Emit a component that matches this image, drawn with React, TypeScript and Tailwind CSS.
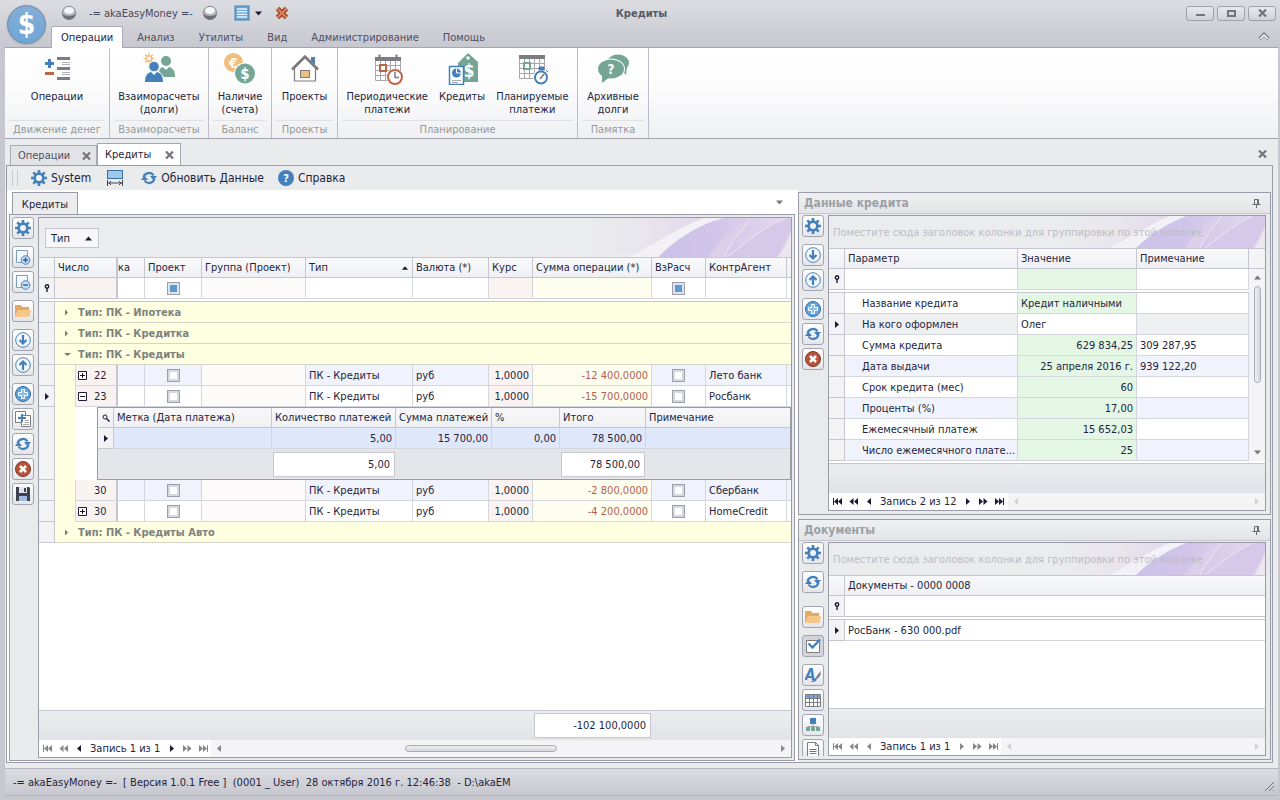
import { ReactNode } from 'react';

interface IconProps {
  className?: string;
}

interface ToolItem {
  label: string;
  icon: ReactNode;
  gap?: string;
  pressed?: boolean;
}

interface Operation {
  id: string;
  day: string;
  expand: string;
  sum: string;
  agent: string;
}

const BLUE = '#4680bb';
const GREEN = '#74a595';
const GRAY = '#7b7b80';
const ORANGE = '#efbd7c';
const RUST = '#bd6646';

const OperationsIcon = () => (
  <svg viewBox="0 0 32 32" className="size-8">
    <path d="M7 6h3v3h3v3h-3v3H7v-3H4V9h3z" fill={BLUE} />
    <rect x="4" y="19" width="9" height="3" fill={RUST} />
    <path d="M16 4h13v3H16zM16 14h13v3H16zM16 24h13v3H16z" fill={GRAY} />
    <path d="M21 9.500h8M21 11.500h8M21 19.500h8M21 21.500h8" stroke="#b4b4b8" />
  </svg>
);

const PeopleIcon = () => (
  <svg viewBox="0 0 32 32" className="size-8">
    <path d="M6 0v11M.5 5.500h11M2 1.500l8 8M10 1.500l-8 8" stroke={ORANGE} strokeWidth="1.200" />
    <circle cx="6" cy="5.500" r="2.800" fill="#fff" stroke={ORANGE} strokeWidth="1.500" />
    <circle cx="23" cy="8" r="5" fill={GREEN} />
    <path d="M16 18c1-3 3-4 4-4l3 3 3-3c4 1 6 4 6 10H21z" fill={GREEN} />
    <circle cx="11" cy="13.500" r="5.200" fill={BLUE} stroke="#fff" strokeWidth=".8" />
    <path d="M2 29c0-6 2-9 6-10l3 3 3-3c4 1 6 4 6 10z" fill={BLUE} />
  </svg>
);

const CoinsIcon = () => (
  <svg viewBox="0 0 32 32" className="size-8">
    <circle cx="9.500" cy="9.500" r="9.500" fill={ORANGE} />
    <text x="9.500" y="14.500" textAnchor="middle" fontSize="14" fontWeight="bold" fill="#fff">€</text>
    <circle cx="21" cy="20.500" r="11" fill="#fff" />
    <circle cx="21" cy="20.500" r="10" fill={GREEN} />
    <text x="21" y="26" textAnchor="middle" fontSize="15" fontWeight="bold" fill="#fff">$</text>
  </svg>
);

const HouseIcon = () => (
  <svg viewBox="0 0 32 32" className="size-8">
    <path d="M22 4h4v8l-4-4z" fill={BLUE} />
    <path d="M5.500 15v13h21V15L16 4.500z" fill="#fff" stroke={GRAY} strokeWidth="1.200" />
    <path d="M3 16.500L16 3.500l13 13" fill="none" stroke={GRAY} strokeWidth="2.600" />
    <rect x="11.500" y="17.500" width="9" height="7" fill={ORANGE} stroke={GRAY} />
  </svg>
);

const CalendarGrid = () => (
  <g>
    <path d="M4.500 6v21.500h25V6zM4.500 12.500h25M4.500 17.500h25M4.500 22.500h25M9.500 8v19.500M14.500 8v19.500M19.500 8v19.500M24.500 8v19.500" fill="#fff" stroke="#a7a7ab" />
    <rect x="4" y="4" width="26" height="4" fill={GRAY} />
  </g>
);

const PeriodicIcon = () => (
  <svg viewBox="0 0 32 32" className="size-8">
    <CalendarGrid />
    <path d="M8.500 1.500v4M25.500 1.500v4" stroke={GRAY} strokeWidth="2" />
    <rect x="9" y="12" width="6" height="6" fill="#fff" stroke={RUST} strokeWidth="2" />
    <circle cx="24" cy="24" r="8.500" fill="#fff" />
    <circle cx="24" cy="24" r="7" fill="#fff" stroke={RUST} strokeWidth="2" />
    <path d="M24 19v5.500h4" fill="none" stroke={GRAY} strokeWidth="1.500" />
  </svg>
);

const CreditsIcon = () => (
  <svg viewBox="0 0 32 32" className="size-8">
    <path d="M12 10L22 0l10 9v20H12z" fill={GREEN} />
    <circle cx="22" cy="5" r="1.800" fill="#fff" />
    <text x="23" y="24" textAnchor="middle" fontSize="17" fontWeight="bold" fill="#fff">$</text>
    <rect x="3.500" y="13.500" width="14" height="18" fill="#fff" stroke={BLUE} strokeWidth="1.500" />
    <circle cx="10.500" cy="20" r="4.500" fill={BLUE} />
    <path d="M10.500 15.500V20H15" fill="none" stroke="#fff" />
    <path d="M6 27.500h9M6 29.500h6" stroke="#a7a7ab" />
  </svg>
);

const PlannedIcon = () => (
  <svg viewBox="0 0 32 32" className="size-8">
    <g transform="translate(-1 -2)">
      <CalendarGrid />
    </g>
    <rect x="8" y="10" width="6" height="6" fill="#fff" stroke={GREEN} strokeWidth="2" />
    <circle cx="25" cy="24.500" r="8" fill="#fff" />
    <path d="M23 14h5v3h-5zM30 17l2 2" fill={BLUE} stroke={BLUE} />
    <circle cx="25" cy="24.500" r="6" fill="#fff" stroke={BLUE} strokeWidth="2" />
    <path d="M24 26l4-5" stroke={GRAY} strokeWidth="1.500" />
  </svg>
);

const ArchiveIcon = () => (
  <svg viewBox="0 0 32 32" className="size-8">
    <ellipse cx="21" cy="10" rx="11" ry="8.500" fill={GREEN} />
    <path d="M24 16l5 6 1-8z" fill={GREEN} />
    <ellipse cx="14" cy="16" rx="14" ry="10.500" fill="#fff" />
    <ellipse cx="14" cy="16" rx="13" ry="9.500" fill={GREEN} />
    <path d="M5 21v9l8-6z" fill={GREEN} />
    <text x="14" y="21" textAnchor="middle" fontSize="14" fontWeight="bold" fill="#fff">?</text>
  </svg>
);

const GearIcon = () => (
  <svg viewBox="0 0 16 16" className="size-4">
    <path
      d="M8 0v16M0 8h16M2.300 2.300l11.400 11.400M13.700 2.300L2.300 13.700"
      stroke={BLUE}
      strokeWidth="2.600"
    />
    <circle cx="8" cy="8" r="5.700" fill={BLUE} />
    <circle cx="8" cy="8" r="3" fill="#f2f3f6" />
  </svg>
);

const RefreshIcon = () => (
  <svg viewBox="0 0 16 16" className="size-4">
    <path d="M2.500 7C4 2.500 10 1.500 12.500 5.500M13.500 9C12 13.500 6 14.500 3.500 10.500" fill="none" stroke={BLUE} strokeWidth="2.200" />
    <path d="M9 6h7l-3.500 4.500zM0 10l3.500-4.500L7 10z" fill={BLUE} />
  </svg>
);

const FitWidthIcon = () => (
  <svg viewBox="0 0 16 16" className="size-4">
    <rect x=".5" y=".5" width="15" height="8" fill="#9cc9e8" stroke="#3a6e9c" />
    <path d="M.5 10v6M15.500 10v6M1 13h14M4 11l-2 2 2 2M12 11l2 2-2 2" fill="none" stroke="#44444c" />
  </svg>
);

const HelpIcon = () => (
  <svg viewBox="0 0 16 16" className="size-4">
    <circle cx="8" cy="8" r="8" fill={BLUE} />
    <text x="8" y="12" textAnchor="middle" fontSize="11" fontWeight="bold" fill="#fff">?</text>
  </svg>
);

const PageIcon = ({ minus }: { minus?: boolean }) => (
  <svg viewBox="0 0 16 16" className="size-4">
    <path d="M1.500 1.500h11v12h-11z" fill="#f4f8fc" stroke="#7d9dc0" />
    <circle cx="10.500" cy="11" r="4.300" fill="#c8def2" stroke={BLUE} />
    <path d={minus ? 'M8 11h5' : 'M8 11h5M10.500 8.500v5'} stroke="#2d6299" strokeWidth="1.400" />
  </svg>
);

const FolderIcon = () => (
  <svg viewBox="0 0 16 16" className="size-4">
    <path d="M0 14V2h6l1 2h7v3H4z" fill="#e3aa66" />
    <path d="M0 14L3 7h13l-1.500 7z" fill="#f5c58a" />
  </svg>
);

const CircleArrowIcon = ({ up }: { up?: boolean }) => (
  <svg viewBox="0 0 16 16" className="size-4">
    <circle cx="8" cy="8" r="7.300" fill="#f4f8fc" stroke={BLUE} />
    <path
      d={up ? 'M8 13V4M4.500 8L8 4.500 11.500 8' : 'M8 3v9M4.500 8L8 11.500 11.500 8'}
      fill="none"
      stroke={BLUE}
      strokeWidth="2.200"
    />
  </svg>
);

const AddIcon = () => (
  <svg viewBox="0 0 16 16" className="size-4">
    <circle cx="8" cy="8" r="7.500" fill="#64a4da" stroke="#2f6ca8" />
    <path d="M6.500 3.500h3v3h3v3h-3v3h-3v-3h-3v-3h3z" fill="#8fc0e8" stroke="#fff" />
  </svg>
);

const CopyPlusIcon = () => (
  <svg viewBox="0 0 16 16" className="size-4">
    <path d="M.5.5h10v11H.5z" fill="#fff" stroke={GRAY} />
    <path d="M6.500 4.500h9v11h-9z" fill="#fff" stroke={GRAY} />
    <path d="M10 9.500h4M10 11.500h4M8 13.500h6" stroke="#a7a7ab" />
    <path d="M7 3v8M3 7h8" stroke={BLUE} strokeWidth="2" />
  </svg>
);

const DeleteIcon = () => (
  <svg viewBox="0 0 16 16" className="size-4">
    <circle cx="8" cy="8" r="7.500" fill="#b8533b" stroke="#7d3526" />
    <path d="M5 5l6 6M11 5l-6 6" stroke="#fff" strokeWidth="2.600" />
  </svg>
);

const SaveIcon = () => (
  <svg viewBox="0 0 16 16" className="size-4">
    <path d="M1 1h13l1 1v13H1z" fill="#3d4250" />
    <rect x="4" y="1" width="8" height="6" fill="#dfe6f0" />
    <rect x="9" y="2" width="2" height="4" fill="#3d4250" />
    <rect x="4" y="10" width="8" height="5" fill="#9dbce0" />
  </svg>
);

const CheckIcon = () => (
  <svg viewBox="0 0 16 16" className="size-4">
    <path d="M1.500 2.500h13v12h-13z" fill="#fff" stroke={GRAY} />
    <path d="M3.500 5.500l4 4L15 1.500" fill="none" stroke={BLUE} strokeWidth="2.400" />
  </svg>
);

const FontIcon = () => (
  <svg viewBox="0 0 16 16" className="size-4">
    <text x="0" y="13" fontSize="15" fontWeight="bold" fontStyle="italic" fill={BLUE}>A</text>
    <path d="M15.500 4v4l-3 4-2-1z" fill={GRAY} />
    <path d="M5 15c3 0 3-4 6-4 2 2 0 4-6 4z" fill={BLUE} />
  </svg>
);

const TableIcon = () => (
  <svg viewBox="0 0 16 16" className="size-4">
    <rect x=".5" y="2.500" width="15" height="12" fill="#fff" />
    <rect x="1" y="3" width="14" height="4" fill="#7ba5d2" />
    <path d="M.5 2.500h15v12H.5zM.5 6.500h15M.5 10.500h15M4.500 2v12M8.500 2v12M12.500 2v12" fill="none" stroke={GRAY} />
  </svg>
);

const TreeIcon = () => (
  <svg viewBox="0 0 16 16" className="size-4">
    <rect x="5" y="1" width="6" height="6" fill={BLUE} />
    <path d="M8 7v3M3 12V9.500h10V12" fill="none" stroke="#a7a7ab" />
    <path d="M1 10h4v4H1zM6 10h4v4H6zM11 10h4v4h-4z" fill={GREEN} />
  </svg>
);

const DocumentIcon = () => (
  <svg viewBox="0 0 16 16" className="size-4">
    <path d="M2.500.5h8l3 3v12h-11z" fill="#fff" stroke={GRAY} />
    <path d="M10.500.5v3h3" fill="none" stroke={GRAY} />
    <path d="M4.500 7.500h7M4.500 9.500h7M4.500 11.500h7" stroke={BLUE} />
  </svg>
);

const BallIcon = () => (
  <svg viewBox="0 0 16 16" className="size-4">
    <circle cx="8" cy="8" r="6.700" fill="#b4b4bd" stroke="#8d8d98" />
    <ellipse cx="8" cy="5.500" rx="5" ry="3.500" fill="#f4f4f7" />
    <path d="M1.500 9.500a6.500 5 0 0 0 13 0 12 8 0 0 1-13 0z" fill="#6f6f7a" />
  </svg>
);

const ListIcon = () => (
  <svg viewBox="0 0 16 16" className="size-4">
    <rect x="1" y="1" width="14" height="14" fill="#6aa9da" stroke="#4a80ac" />
    <path d="M3 4h10M3 6.700h10M3 9.400h10M3 12h10" stroke="#eaf4fc" strokeWidth="1.300" />
  </svg>
);

const CloseCrossIcon = () => (
  <svg viewBox="0 0 16 16" className="size-4">
    <path d="M3.500 3.500l9 9M12.500 3.500l-9 9" stroke="#9c4125" strokeWidth="4.800" />
    <path d="M3.700 3.700l8.600 8.600M12.300 3.700l-8.600 8.600" stroke="#dd8158" strokeWidth="2.200" />
  </svg>
);

const SmallCross = () => (
  <svg viewBox="0 0 9 8" className="h-2 w-[9px]">
    <path d="M1 0.500l7 7M8 .5l-7 7" stroke="#73737b" strokeWidth="2.200" />
  </svg>
);

const Arrow = ({ path, color = '#1d1a36', className = 'size-[9px]' }: IconProps & { path: string; color?: string }) => (
  <svg viewBox="0 0 9 9" className={className}>
    <path d={path} fill={color} />
  </svg>
);

const RIGHT = 'M3 1l4 3.500L3 8z';
const LEFT = 'M6 1L2 4.500 6 8z';
const UP = 'M1 6.500l3.500-4 3.500 4z';
const DOWN = 'M1 2.500h7l-3.500 4z';
const DOUBLE_LEFT = 'M4.500 1L.5 4.500l4 3.500zM9 1L5 4.500 9 8z';
const DOUBLE_RIGHT = 'M0 1l4 3.500L0 8zM4.500 1l4 3.500-4 3.500z';
const FIRST = 'M0 1h1v7H0zM5 1L1 4.500 5 8zM9 1L5 4.500 9 8z';
const LAST = 'M8 1h1v7H8zM0 1l4 3.500L0 8zM4 1l4 3.500L4 8z';

const FilterPin = () => (
  <svg viewBox="0 0 8 8" className="mx-auto h-2 w-2">
    <circle cx="4" cy="2.500" r="1.700" fill="none" stroke="#1d1a36" strokeWidth="1.400" />
    <path d="M4 4v4" stroke="#1d1a36" strokeWidth="1.400" />
  </svg>
);

const ThumbTack = () => (
  <svg viewBox="0 0 9 9" className="size-[9px]">
    <path d="M2.500 0.500h4v5h-4zM.5 5.500h8M4.500 6v3" fill="none" stroke="#6a6a74" />
    <path d="M5 1h2v4H5z" fill="#6a6a74" />
  </svg>
);

const Petals = () => (
  <svg viewBox="0 0 200 40" preserveAspectRatio="xMaxYMid slice" className="absolute inset-y-0 right-0 h-full w-[205px]">
    <defs>
      <linearGradient id="petalSoft" x1="0" x2="1" y1="0" y2="0">
        <stop offset="0" stopColor="#ebecee" />
        <stop offset=".5" stopColor="#e8e5ed" />
        <stop offset="1" stopColor="#e2d6ea" />
      </linearGradient>
      <linearGradient id="petalDeep" x1="0" x2="1" y1="0" y2="0">
        <stop offset="0" stopColor="#cbc0e8" />
        <stop offset=".4" stopColor="#d0c5e9" />
        <stop offset="1" stopColor="#e3d9ec" />
      </linearGradient>
    </defs>
    <path d="M0 0h118C95 8 75 20 50 36L0 40z" fill="url(#petalSoft)" />
    <path d="M40 40C65 28 92 9 118 0h22C112 8 88 20 70 40z" fill="#f2f1f5" />
    <path d="M70 40C86 22 112 6 138 0h62v40z" fill="url(#petalDeep)" />
    <path d="M118 40c10-14 22-28 42-38-14 16-20 26-24 38z" fill="#dccfe9" />
    <path d="M136 40c18-14 36-30 60-39l4 1v12l-14 26z" fill="#d6c8e9" />
    <path d="M160 2c-8 10-18 22-26 38M136 40c18-14 36-30 60-39" fill="none" stroke="#e9e2f1" />
    <path d="M186 40c7-7 11-15 14-26v26z" fill="#eae8ee" />
  </svg>
);

const ribbonTabs = ['Операции', 'Анализ', 'Утилиты', 'Вид', 'Администрирование', 'Помощь'];

const ribbonGroups = [
  {
    caption: 'Движение денег',
    width: 'w-[105px]',
    items: [{ icon: <OperationsIcon />, lines: ['Операции'] }]
  },
  {
    caption: 'Взаиморасчеты',
    width: 'w-[99px]',
    items: [{ icon: <PeopleIcon />, lines: ['Взаиморасчеты', '(долги)'] }]
  },
  {
    caption: 'Баланс',
    width: 'w-[63px]',
    items: [{ icon: <CoinsIcon />, lines: ['Наличие', '(счета)'] }]
  },
  {
    caption: 'Проекты',
    width: 'w-[66px]',
    items: [{ icon: <HouseIcon />, lines: ['Проекты'] }]
  },
  {
    caption: 'Планирование',
    width: 'w-[240px]',
    items: [
      { icon: <PeriodicIcon />, lines: ['Периодические', 'платежи'] },
      { icon: <CreditsIcon />, lines: ['Кредиты'] },
      { icon: <PlannedIcon />, lines: ['Планируемые', 'платежи'] }
    ]
  },
  {
    caption: 'Памятка',
    width: 'w-[71px]',
    items: [{ icon: <ArchiveIcon />, lines: ['Архивные', 'долги'] }]
  }
];

const mainTools: ToolItem[] = [
  { label: 'Настройки', icon: <GearIcon /> },
  { label: 'Развернуть', icon: <PageIcon />, gap: 'mt-[7px]' },
  { label: 'Свернуть', icon: <PageIcon minus /> },
  { label: 'Открыть', icon: <FolderIcon />, gap: 'mt-[7px]' },
  { label: 'Вниз', icon: <CircleArrowIcon />, gap: 'mt-[7px]' },
  { label: 'Вверх', icon: <CircleArrowIcon up /> },
  { label: 'Добавить', icon: <AddIcon />, gap: 'mt-[7px]' },
  { label: 'Копировать', icon: <CopyPlusIcon /> },
  { label: 'Обновить', icon: <RefreshIcon /> },
  { label: 'Удалить', icon: <DeleteIcon /> },
  { label: 'Сохранить', icon: <SaveIcon /> }
];

const creditTools: ToolItem[] = [
  { label: 'Настройки', icon: <GearIcon /> },
  { label: 'Вниз', icon: <CircleArrowIcon />, gap: 'mt-[7px]' },
  { label: 'Вверх', icon: <CircleArrowIcon up /> },
  { label: 'Добавить', icon: <AddIcon />, gap: 'mt-[7px]' },
  { label: 'Обновить', icon: <RefreshIcon /> },
  { label: 'Удалить', icon: <DeleteIcon /> }
];

const documentTools: ToolItem[] = [
  { label: 'Настройки', icon: <GearIcon /> },
  { label: 'Обновить', icon: <RefreshIcon />, gap: 'mt-[7px]' },
  { label: 'Открыть', icon: <FolderIcon />, gap: 'mt-[13px]' },
  { label: 'Отметить', icon: <CheckIcon />, gap: 'mt-[7px]', pressed: true },
  { label: 'Шрифт', icon: <FontIcon />, gap: 'mt-[7px]' },
  { label: 'Таблица', icon: <TableIcon /> },
  { label: 'Дерево', icon: <TreeIcon /> },
  { label: 'Документ', icon: <DocumentIcon /> }
];

const operationsBefore: Operation[] = [
  { id: 'a', day: '22', expand: '+', sum: '-12 400,0000', agent: 'Лето банк' },
  { id: 'b', day: '23', expand: '-', sum: '-15 700,0000', agent: 'Росбанк' }
];

const operationsAfter: Operation[] = [
  { id: 'c', day: '30', expand: '', sum: '-2 800,0000', agent: 'Сбербанк' },
  { id: 'd', day: '30', expand: '+', sum: '-4 200,0000', agent: 'HomeCredit' }
];

const creditRows = [
  { name: 'Название кредита', value: 'Кредит наличными', note: '', left: true },
  { name: 'На кого оформлен', value: 'Олег', note: '', left: true, active: true },
  { name: 'Сумма кредита', value: '629 834,25', note: '309 287,95' },
  { name: 'Дата выдачи', value: '25 апреля 2016 г.', note: '939 122,20' },
  { name: 'Срок кредита (мес)', value: '60', note: '' },
  { name: 'Проценты (%)', value: '17,00', note: '' },
  { name: 'Ежемесячный платеж', value: '15 652,03', note: '' },
  { name: 'Число ежемесячного плате...', value: '25', note: '' }
];

const headCell = 'h-5 overflow-hidden border-r border-b border-[#c5c6cf] px-[3px] text-left font-normal whitespace-nowrap';
const cell = 'h-[21px] overflow-hidden border-r border-b border-[#d3d6dc] px-[3px] whitespace-nowrap';
const markCell = 'h-[21px] border-r border-b border-[#c5c6cf] bg-[#f3f3f6]';

const ToolStrip = ({ items }: { items: ToolItem[] }) => (
  <div className="flex w-[22px] shrink-0 flex-col overflow-hidden">
    {items.map((item, i) => (
      <button
        key={item.label}
        aria-label={item.label}
        className={`flex size-[22px] shrink-0 items-center justify-center rounded-[3px] border border-[#a3a4b1] ${
          item.pressed ? 'bg-[#d2d3db]' : 'bg-gradient-to-b from-white to-[#e4e5ea]'
        } ${item.gap ?? (i ? 'mt-[3px]' : '')}`}
      >
        {item.icon}
      </button>
    ))}
  </div>
);

const NavButton = ({ label, path, dim }: { label: string; path: string; dim?: boolean }) => (
  <button aria-label={label} className="flex w-4 items-center justify-center">
    <Arrow path={path} color={dim ? '#85858c' : '#1d1a36'} />
  </button>
);

interface NavigatorProps {
  text: string;
  dimStart?: boolean;
  dimPrev?: boolean;
  dimNext?: boolean;
  dimEnd?: boolean;
  thumb?: boolean;
}

const Navigator = ({ text, dimStart, dimPrev, dimNext, dimEnd, thumb }: NavigatorProps) => (
  <div className="flex h-[17px] shrink-0 bg-[#f4f4f7]">
    <div className="flex bg-white">
      <NavButton label="Первая" path={FIRST} dim={dimStart} />
      <NavButton label="Страница назад" path={DOUBLE_LEFT} dim={dimStart} />
      <NavButton label="Назад" path={LEFT} dim={dimPrev} />
      <span className="px-[3px] leading-[17px]">{text}</span>
      <NavButton label="Вперед" path={RIGHT} dim={dimNext} />
      <NavButton label="Страница вперед" path={DOUBLE_RIGHT} dim={dimEnd} />
      <NavButton label="Последняя" path={LAST} dim={dimEnd} />
    </div>
    <div className="flex flex-1 items-center px-1">
      <Arrow path={LEFT} color={thumb ? '#85858c' : '#cfcfd5'} />
      <div className="flex-[9]" />
      {thumb && (
        <div className="h-[7px] w-[152px] rounded-full border border-[#a9aab5] bg-gradient-to-b from-[#eeeef2] to-[#d5d6dd]" />
      )}
      <div className="flex-[11]" />
      <Arrow path={RIGHT} color={thumb ? '#85858c' : '#cfcfd5'} />
    </div>
  </div>
);

const TitleBar = () => (
  <header className="relative shrink-0 border-b border-[#a3a4b1]">
    <button
      aria-label="Меню программы"
      className="absolute top-[5px] left-[2px] flex size-[39px] items-center justify-center rounded-full border border-[#7186a3] bg-gradient-to-b from-[#84aed6] to-[#6fa6d6] text-[28px] font-bold text-white shadow"
    >
      $
    </button>
    <div className="grid h-[26px] grid-cols-[1fr_auto_1fr] items-center">
      <div className="flex items-center pl-14">
        <BallIcon />
        <span className="mr-[9px] ml-3 whitespace-nowrap text-[#45485a]">-= akaEasyMoney =-</span>
        <BallIcon />
        <button aria-label="Вид списка" className="ml-4 flex items-center gap-1">
          <ListIcon />
          <Arrow path={DOWN} />
        </button>
        <button aria-label="Закрыть все" className="ml-[11px]">
          <CloseCrossIcon />
        </button>
      </div>
      <h1 className="text-[11px] font-bold text-[#565968]">Кредиты</h1>
      <div className="flex justify-end gap-[3px] pr-[2px]">
        {['Свернуть окно', 'Развернуть окно', 'Закрыть окно'].map((label, i) => (
          <button
            key={label}
            aria-label={label}
            className="flex h-[15px] w-7 items-center justify-center rounded-[3px] border border-[#a0a0ad] bg-gradient-to-b from-[#e9e9ed] to-[#d0d0d8]"
          >
            {i === 0 && <span className="mt-1 h-[2px] w-[9px] bg-[#73737b]" />}
            {i === 1 && <span className="h-[7px] w-[9px] border-2 border-[#73737b]" />}
            {i === 2 && <SmallCross />}
          </button>
        ))}
      </div>
    </div>
    <nav className="flex h-[21px] items-stretch gap-1 pl-[46px]">
      {ribbonTabs.map((tab, i) => (
        <button
          key={tab}
          className={
            i === 0
              ? '-mb-px rounded-t-[2px] border border-b-0 border-[#a9aab5] bg-white px-[9px]'
              : 'px-[10px] pt-[2px] text-[#4d5064]'
          }
        >
          {tab}
        </button>
      ))}
      <button aria-label="Свернуть ленту" className="mr-2 ml-auto">
        <svg viewBox="0 0 12 9" className="h-[9px] w-3">
          <path d="M1.500 7L6 2.500 10.500 7" fill="none" stroke="#7d7d88" strokeWidth="3.500" />
          <path d="M2 7l4-4 4 4" fill="none" stroke="#fff" strokeWidth="1.500" />
        </svg>
      </button>
    </nav>
  </header>
);

const Ribbon = () => (
  <section className="flex h-[91px] shrink-0 border-b border-[#a3a4b1] bg-gradient-to-b from-white via-[#fbfbfc] to-[#eff0f2]">
    {ribbonGroups.map((group) => (
      <div key={group.caption} className={`flex flex-col border-r border-[#bcbdc6] ${group.width}`}>
        <div className="flex flex-1 items-start justify-center gap-[11px] pt-[5px]">
          {group.items.map((item) => (
            <button key={item.lines[0]} className="flex flex-col items-center gap-[5px] whitespace-nowrap">
              {item.icon}
              <span>
                {item.lines.map((line) => (
                  <span key={line} className="block">
                    {line}
                  </span>
                ))}
              </span>
            </button>
          ))}
        </div>
        <div className="mx-1 h-[18px] border-t border-[#e0e1e5] text-center leading-[18px] whitespace-nowrap text-[#949a9b]">
          {group.caption}
        </div>
      </div>
    ))}
  </section>
);

const Toolbar = () => (
  <div className="flex h-6 shrink-0 items-center text-[12px]">
    <div className="ml-[5px] h-4 w-[6px] border-x border-[#c9cad2]" />
    <button className="ml-[13px] flex items-center gap-1">
      <GearIcon />
      System
    </button>
    <button aria-label="По ширине" className="ml-4">
      <FitWidthIcon />
    </button>
    <button className="ml-[18px] flex items-center gap-1">
      <RefreshIcon />
      Обновить Данные
    </button>
    <button className="ml-[14px] flex items-center gap-1">
      <HelpIcon />
      Справка
    </button>
  </div>
);

// Shared by the grid and its totals row so the columns line up
const OperationColumns = () => (
  <colgroup>
    <col className="w-[16px]" />
    <col className="w-[21px]" />
    <col className="w-[42px]" />
    <col className="w-[27px]" />
    <col className="w-[57px]" />
    <col className="w-[104px]" />
    <col className="w-[107px]" />
    <col className="w-[76px]" />
    <col className="w-[44px]" />
    <col className="w-[119px]" />
    <col className="w-[54px]" />
    <col />
    <col className="w-[4px]" />
  </colgroup>
);

const CheckBox = ({ label, mixed }: { label: string; mixed?: boolean }) => (
  <input
    type="checkbox"
    aria-label={label}
    className={`mx-auto block size-[13px] appearance-none border border-[#9d9eaa] ${
      mixed ? 'bg-[#5d98cf] shadow-[inset_0_0_0_2px_#dbe5f0]' : 'bg-white shadow-[inset_0_0_0_2px_#d6d8df]'
    }`}
  />
);

const FilterInput = ({ label }: { label: string }) => (
  <input type="text" aria-label={label} className="block h-4 w-full bg-transparent outline-none" />
);

const GroupRow = ({ title, open }: { title: string; open?: boolean }) => (
  <tr>
    <td className={markCell} />
    <td colSpan={12} className="h-[21px] border-b border-[#d3d6c8] bg-[#fefee0] px-2 font-bold text-[#7e827f]">
      <span className="flex items-center gap-[6px]">
        <Arrow path={open ? 'M1 3h7L4.500 6z' : 'M2 1.500L5 4.500 2 7.500z'} color="#77777c" />
        {title}
      </span>
    </td>
  </tr>
);

const OperationRow = ({ row, shaded, current }: { row: Operation; shaded?: boolean; current?: boolean }) => {
  const tint = shaded ? 'bg-[#f0f3fc]' : 'bg-white';

  return (
    <tr>
      <td className={markCell}>{current && <Arrow path={RIGHT} className="mx-auto size-[9px]" />}</td>
      <td className="border-r border-[#d3d6dc] bg-[#fefee0]" />
      <td className="h-[21px] border-r-2 border-b border-[#c5c6cf] border-b-[#d3d6dc] bg-[#f8f3f1] pl-[2px]">
        <span className="flex items-center gap-[7px]">
          <svg viewBox="0 0 9 9" className="size-[9px]">
            {row.expand && <path d="M.5.5h8v8h-8zM2 4.500h5" fill="#fff" stroke="#1d1a36" />}
            {row.expand === '+' && <path d="M4.500 2v5" stroke="#1d1a36" />}
          </svg>
          {row.day}
        </span>
      </td>
      <td className={`${cell} ${tint}`} />
      <td className={`${cell} ${tint}`}>
        <CheckBox label="Проект" />
      </td>
      <td className={`${cell} bg-[#fcfbfa]`} />
      <td className={`${cell} ${tint}`}>ПК - Кредиты</td>
      <td className={`${cell} ${tint}`}>руб</td>
      <td className={`${cell} bg-[#faf3f1] text-right`}>1,0000</td>
      <td className={`${cell} bg-[#fefeee] text-right text-[#b4614f]`}>{row.sum}</td>
      <td className={`${cell} ${tint}`}>
        <CheckBox label="ВзРасч" />
      </td>
      <td className={`${cell} ${tint}`}>{row.agent}</td>
      <td className={`border-b border-[#d3d6dc] ${tint}`} />
    </tr>
  );
};

const PaymentsTable = () => (
  <table className="w-full table-fixed border-separate border-spacing-0 border border-[#9a9ba8]">
    <colgroup>
      <col className="w-[16px]" />
      <col className="w-[158px]" />
      <col className="w-[124px]" />
      <col className="w-[96px]" />
      <col className="w-[68px]" />
      <col className="w-[86px]" />
      <col />
    </colgroup>
    <thead className="bg-gradient-to-b from-[#f8f8fa] to-[#eff0f3]">
      <tr>
        <th className="h-5 border-r border-b border-[#c5c6cf]">
          <svg viewBox="0 0 8 8" className="mx-auto size-2">
            <circle cx="3" cy="3" r="2" fill="none" stroke="#1d1a36" />
            <path d="M4.500 4.500L7.500 7.500" stroke="#1d1a36" strokeWidth="1.500" />
          </svg>
        </th>
        {['Метка (Дата платежа)', 'Количество платежей', 'Сумма платежей', '%', 'Итого', 'Примечание'].map((name) => (
          <th key={name} className="h-5 border-r border-b border-[#c5c6cf] px-[3px] text-left font-normal whitespace-nowrap last:border-r-0">
            {name}
          </th>
        ))}
      </tr>
    </thead>
    <tbody className="bg-[#dfe7fb]">
      <tr>
        <td className={markCell}>
          <Arrow path={RIGHT} className="mx-auto size-[9px]" />
        </td>
        <td className={cell} />
        <td className={`${cell} text-right`}>5,00</td>
        <td className={`${cell} text-right`}>15 700,00</td>
        <td className={`${cell} text-right`}>0,00</td>
        <td className={`${cell} text-right`}>78 500,00</td>
        <td className="border-b border-[#d3d6dc]" />
      </tr>
    </tbody>
    <tfoot className="bg-[#e5e6e9]">
      <tr>
        <td colSpan={2} className="h-[30px]" />
        <td className="px-px">
          <div className="h-[25px] border border-[#c5c6cf] bg-white px-1 text-right leading-[24px]">5,00</div>
        </td>
        <td colSpan={2} />
        <td className="px-px">
          <div className="h-[25px] border border-[#c5c6cf] bg-white px-1 text-right leading-[24px]">78 500,00</div>
        </td>
        <td />
      </tr>
    </tfoot>
  </table>
);

const OperationsGrid = () => (
  <div className="flex min-w-0 flex-1 flex-col border border-[#9a9ba8] bg-white">
    <div className="relative h-10 shrink-0 border-b border-[#c5c6cf] bg-[#ebecee]">
      <Petals />
      <button className="mt-[10px] ml-[6px] flex h-5 w-[54px] items-center justify-between border border-[#c5c6cf] bg-[#f7f7f9] px-[5px]">
        Тип
        <Arrow path={UP} />
      </button>
    </div>
    <table className="w-full table-fixed border-separate border-spacing-0">
      <OperationColumns />
      <thead className="bg-gradient-to-b from-[#f9f9fb] to-[#eff0f4]">
        <tr>
          <th className={headCell} />
          <th colSpan={2} className="h-5 border-r-2 border-b border-[#c5c6cf] px-[3px] text-left font-normal">
            Число
          </th>
          <th className="h-5 overflow-hidden border-r border-b border-[#c5c6cf] text-left font-normal">ка</th>
          <th className={headCell}>Проект</th>
          <th className={headCell}>Группа (Проект)</th>
          <th className={headCell}>
            <span className="flex items-center justify-between">
              Тип
              <Arrow path={UP} className="size-2" />
            </span>
          </th>
          <th className={headCell}>Валюта (*)</th>
          <th className={headCell}>Курс</th>
          <th className={headCell}>Сумма операции (*)</th>
          <th className={headCell}>ВзРасч</th>
          <th className={headCell}>КонтрАгент</th>
          <th className="border-b border-[#c5c6cf]" />
        </tr>
      </thead>
      <tbody>
        <tr>
          <td className={markCell}>
            <FilterPin />
          </td>
          <td colSpan={2} className="border-r-2 border-b border-[#c5c6cf] bg-[#f8f3f1] px-1">
            <FilterInput label="Фильтр: Число" />
          </td>
          <td className={cell} />
          <td className={cell}>
            <CheckBox label="Фильтр: Проект" mixed />
          </td>
          <td className={`${cell} bg-[#fcfbfa]`}>
            <FilterInput label="Фильтр: Группа" />
          </td>
          <td className={cell}>
            <FilterInput label="Фильтр: Тип" />
          </td>
          <td className={cell}>
            <FilterInput label="Фильтр: Валюта" />
          </td>
          <td className={`${cell} bg-[#faf3f1]`}>
            <FilterInput label="Фильтр: Курс" />
          </td>
          <td className={`${cell} bg-[#fefeee]`}>
            <FilterInput label="Фильтр: Сумма" />
          </td>
          <td className={cell}>
            <CheckBox label="Фильтр: ВзРасч" mixed />
          </td>
          <td className={cell}>
            <FilterInput label="Фильтр: КонтрАгент" />
          </td>
          <td className="border-b border-[#d3d6dc]" />
        </tr>
        <tr>
          <td colSpan={13} className="h-[3px] border-b border-[#c5c6cf]" />
        </tr>
        <GroupRow title="Тип: ПК - Ипотека" />
        <GroupRow title="Тип: ПК - Кредитка" />
        <GroupRow title="Тип: ПК - Кредиты" open />
        {operationsBefore.map((row, i) => (
          <OperationRow key={row.id} row={row} shaded={i === 0} current={i === 1} />
        ))}
        <tr>
          <td className="border-r border-b border-[#c5c6cf] bg-[#f3f3f6]" />
          <td className="bg-[#fefee0]" />
          <td colSpan={11} className="pl-[21px]">
            <PaymentsTable />
          </td>
        </tr>
        {operationsAfter.map((row, i) => (
          <OperationRow key={row.id} row={row} shaded={i === 0} />
        ))}
        <GroupRow title="Тип: ПК - Кредиты Авто" />
      </tbody>
    </table>
    <div className="flex-1" />
    <table className="w-full table-fixed border-separate border-spacing-0 border-t border-[#c5c6cf] bg-gradient-to-b from-[#ecedef] to-[#e2e3e8]">
      <OperationColumns />
      <tbody>
        <tr>
          <td colSpan={9} className="h-[29px]" />
          <td className="px-px">
            <div className="h-[25px] border border-[#c5c6cf] bg-white px-1 text-right leading-[24px]">-102 100,0000</div>
          </td>
          <td colSpan={3} />
        </tr>
      </tbody>
    </table>
    <Navigator text="Запись 1 из 1" dimStart dimEnd thumb />
  </div>
);

const SidePanel = ({ title, tools, grow, children }: { title: string; tools: ToolItem[]; grow?: boolean; children: ReactNode }) => (
  <section className={`flex flex-col border border-[#9a9ba8] bg-[#e9eaec] ${grow ? 'min-h-0 flex-1' : 'shrink-0'}`}>
    <div className="mb-px flex h-[21px] shrink-0 items-center justify-between border-b border-[#c5c6cf] bg-gradient-to-b from-[#f0f0f2] to-[#e3e4e7] pr-[9px] pl-[5px]">
      <h2 className="text-[12px] font-bold text-[#9ba0a6]">{title}</h2>
      <button aria-label={`Закрепить: ${title}`}>
        <ThumbTack />
      </button>
    </div>
    <div className="flex min-h-0 flex-1 gap-1 pr-1 pb-[3px] pl-[3px]">
      <ToolStrip items={tools} />
      <div className="flex min-w-0 flex-1 flex-col border border-[#9a9ba8] bg-white">
        <div className="relative flex h-[33px] shrink-0 items-center border-b border-[#c5c6cf] bg-[#ebecee] pl-1 text-[#bcbcc3]">
          <Petals />
          <span className="relative truncate">Поместите сюда заголовок колонки для группировки по этой колонке</span>
        </div>
        {children}
      </div>
    </div>
  </section>
);

const Footer = () => (
  <div className="h-[30px] shrink-0 border-t border-[#c5c6cf] bg-gradient-to-b from-[#ecedef] to-[#e2e3e8]" />
);

const CreditPanel = () => (
  <SidePanel title="Данные кредита" tools={creditTools}>
    <div className="flex">
      <table className="w-full min-w-0 flex-1 table-fixed border-separate border-spacing-0">
        <colgroup>
          <col className="w-[16px]" />
          <col className="w-[173px]" />
          <col className="w-[119px]" />
          <col />
        </colgroup>
        <thead className="bg-gradient-to-b from-[#f9f9fb] to-[#eff0f4]">
          <tr>
            <th className={headCell} />
            <th className={headCell}>Параметр</th>
            <th className={headCell}>Значение</th>
            <th className={headCell}>Примечание</th>
          </tr>
        </thead>
        <tbody>
          <tr>
            <td className={markCell}>
              <FilterPin />
            </td>
            <td className={cell}>
              <FilterInput label="Фильтр: Параметр" />
            </td>
            <td className={`${cell} bg-[#e4f6e4]`}>
              <FilterInput label="Фильтр: Значение" />
            </td>
            <td className={cell}>
              <FilterInput label="Фильтр: Примечание" />
            </td>
          </tr>
          <tr>
            <td colSpan={4} className="h-[3px] border-b border-[#c5c6cf]" />
          </tr>
          {creditRows.map((row, i) => {
            const tint = row.active ? 'bg-[#eeeff1]' : i % 2 ? 'bg-[#f0f3fc]' : 'bg-white';
            return (
              <tr key={row.name}>
                <td className={markCell}>{row.active && <Arrow path={RIGHT} className="mx-auto size-[9px]" />}</td>
                <td className={`h-[21px] border-r border-b border-[#d3d6dc] pl-[17px] whitespace-nowrap ${tint}`}>{row.name}</td>
                <td className={`${cell} ${row.active ? 'bg-white' : 'bg-[#e4f6e4]'} ${row.left ? '' : 'text-right'}`}>
                  {row.value}
                </td>
                <td className={`${cell} ${tint}`}>{row.note}</td>
              </tr>
            );
          })}
        </tbody>
      </table>
      <div className="flex w-4 shrink-0 flex-col items-center bg-[#f4f4f7]">
        <div className="h-5 w-full border-b border-[#c5c6cf]" />
        <Arrow path={UP} color="#77777c" className="my-1 size-[9px]" />
        <div className="h-[97px] w-[7px] rounded-full border border-[#a9aab5] bg-gradient-to-r from-[#eeeef2] to-[#d5d6dd]" />
        <Arrow path={DOWN} color="#77777c" className="mt-auto mb-1 size-[9px]" />
      </div>
    </div>
    <div className="h-[2px]" />
    <Footer />
    <Navigator text="Запись 2 из 12" />
  </SidePanel>
);

const DocumentPanel = () => (
  <SidePanel title="Документы" tools={documentTools} grow>
    <table className="w-full table-fixed border-separate border-spacing-0">
      <colgroup>
        <col className="w-[16px]" />
        <col />
      </colgroup>
      <thead className="bg-gradient-to-b from-[#f9f9fb] to-[#eff0f4]">
        <tr>
          <th className={headCell} />
          <th className="h-5 border-b border-[#c5c6cf] px-[3px] text-left font-normal">Документы - 0000 0008</th>
        </tr>
      </thead>
      <tbody>
        <tr>
          <td className={markCell}>
            <FilterPin />
          </td>
          <td className="border-b border-[#c5c6cf] px-1">
            <FilterInput label="Фильтр: Документы" />
          </td>
        </tr>
        <tr>
          <td colSpan={2} className="h-[3px] border-b border-[#c5c6cf]" />
        </tr>
        <tr>
          <td className={markCell}>
            <Arrow path={RIGHT} className="mx-auto size-[9px]" />
          </td>
          <td className="border-b border-[#d3d6dc] px-[3px]">РосБанк - 630 000.pdf</td>
        </tr>
      </tbody>
    </table>
    <div className="flex-1" />
    <Footer />
    <Navigator text="Запись 1 из 1" dimStart dimPrev dimNext dimEnd />
  </SidePanel>
);

const App = () => {
  return (
    <div className="flex h-screen flex-col overflow-hidden bg-gradient-to-b from-[#dcdde1] to-[#c7c7d0] to-[48px] pr-[2px] pl-[5px] font-['DejaVu_Sans_Condensed','Noto_Sans',sans-serif] text-[11px] leading-[13px] text-[#231f3e]">
      <TitleBar />
      <Ribbon />
      <main className="flex min-h-0 flex-1 flex-col bg-[#eaebed] pr-[5px] pb-[5px] pl-px">
        <div className="flex h-[26px] shrink-0 items-end pl-1">
          <div className="flex h-5 w-[87px] items-center justify-between border border-b-0 border-[#a9aab5] bg-[#e2e3e7] pr-[5px] pl-[7px] text-[#4d5064]">
            <button>Операции</button>
            <button aria-label="Закрыть: Операции">
              <SmallCross />
            </button>
          </div>
          <div className="flex h-[22px] w-[84px] items-center justify-between border border-b-0 border-[#a3a4b1] bg-white pr-[6px] pl-[7px]">
            <button>Кредиты</button>
            <button aria-label="Закрыть: Кредиты">
              <SmallCross />
            </button>
          </div>
          <button aria-label="Закрыть вкладку" className="mr-[6px] mb-[7px] ml-auto">
            <SmallCross />
          </button>
        </div>
        <div className="flex min-h-0 flex-1 flex-col border border-[#9a9ba8]">
          <Toolbar />
          <div className="flex min-h-0 flex-1">
            <section className="flex min-w-0 flex-1 flex-col bg-white pr-[3px] pb-px pl-[2px]">
              <div className="flex h-6 shrink-0 items-end justify-between pl-[3px]">
                <button className="-mb-px h-[23px] w-[66px] border border-b-0 border-[#9a9ba8] bg-[#ebecee]">Кредиты</button>
                <button aria-label="Список вкладок" className="mr-[11px] mb-[7px]">
                  <Arrow path={DOWN} color="#77777c" />
                </button>
              </div>
              <div className="flex min-h-0 flex-1 gap-1 border border-[#9a9ba8] bg-[#e9eaec] p-[2px]">
                <ToolStrip items={mainTools} />
                <OperationsGrid />
              </div>
            </section>
            <aside className="flex w-[474px] shrink-0 flex-col gap-1 pt-[2px] pr-px pb-[2px]">
              <CreditPanel />
              <DocumentPanel />
            </aside>
          </div>
        </div>
      </main>
      <footer className="flex h-7 shrink-0 items-center justify-between border-y border-[#b4b5c0] bg-gradient-to-b from-[#dcdde1] to-[#c7c7d0] pr-1 pl-2">
        <span className="whitespace-pre">
          -= akaEasyMoney =-  [ Версия 1.0.1 Free ]  (0001 _ User)  28 октября 2016 г. 12:46:38  - D:\akaEM
        </span>
        <svg viewBox="0 0 10 10" className="mb-1 size-[10px] self-end">
          <path d="M1 10l9-9M5 10l5-5M9 10l1-1" stroke="#77777f" />
        </svg>
      </footer>
      <div className="h-1 shrink-0" />
    </div>
  );
};

export default App;
